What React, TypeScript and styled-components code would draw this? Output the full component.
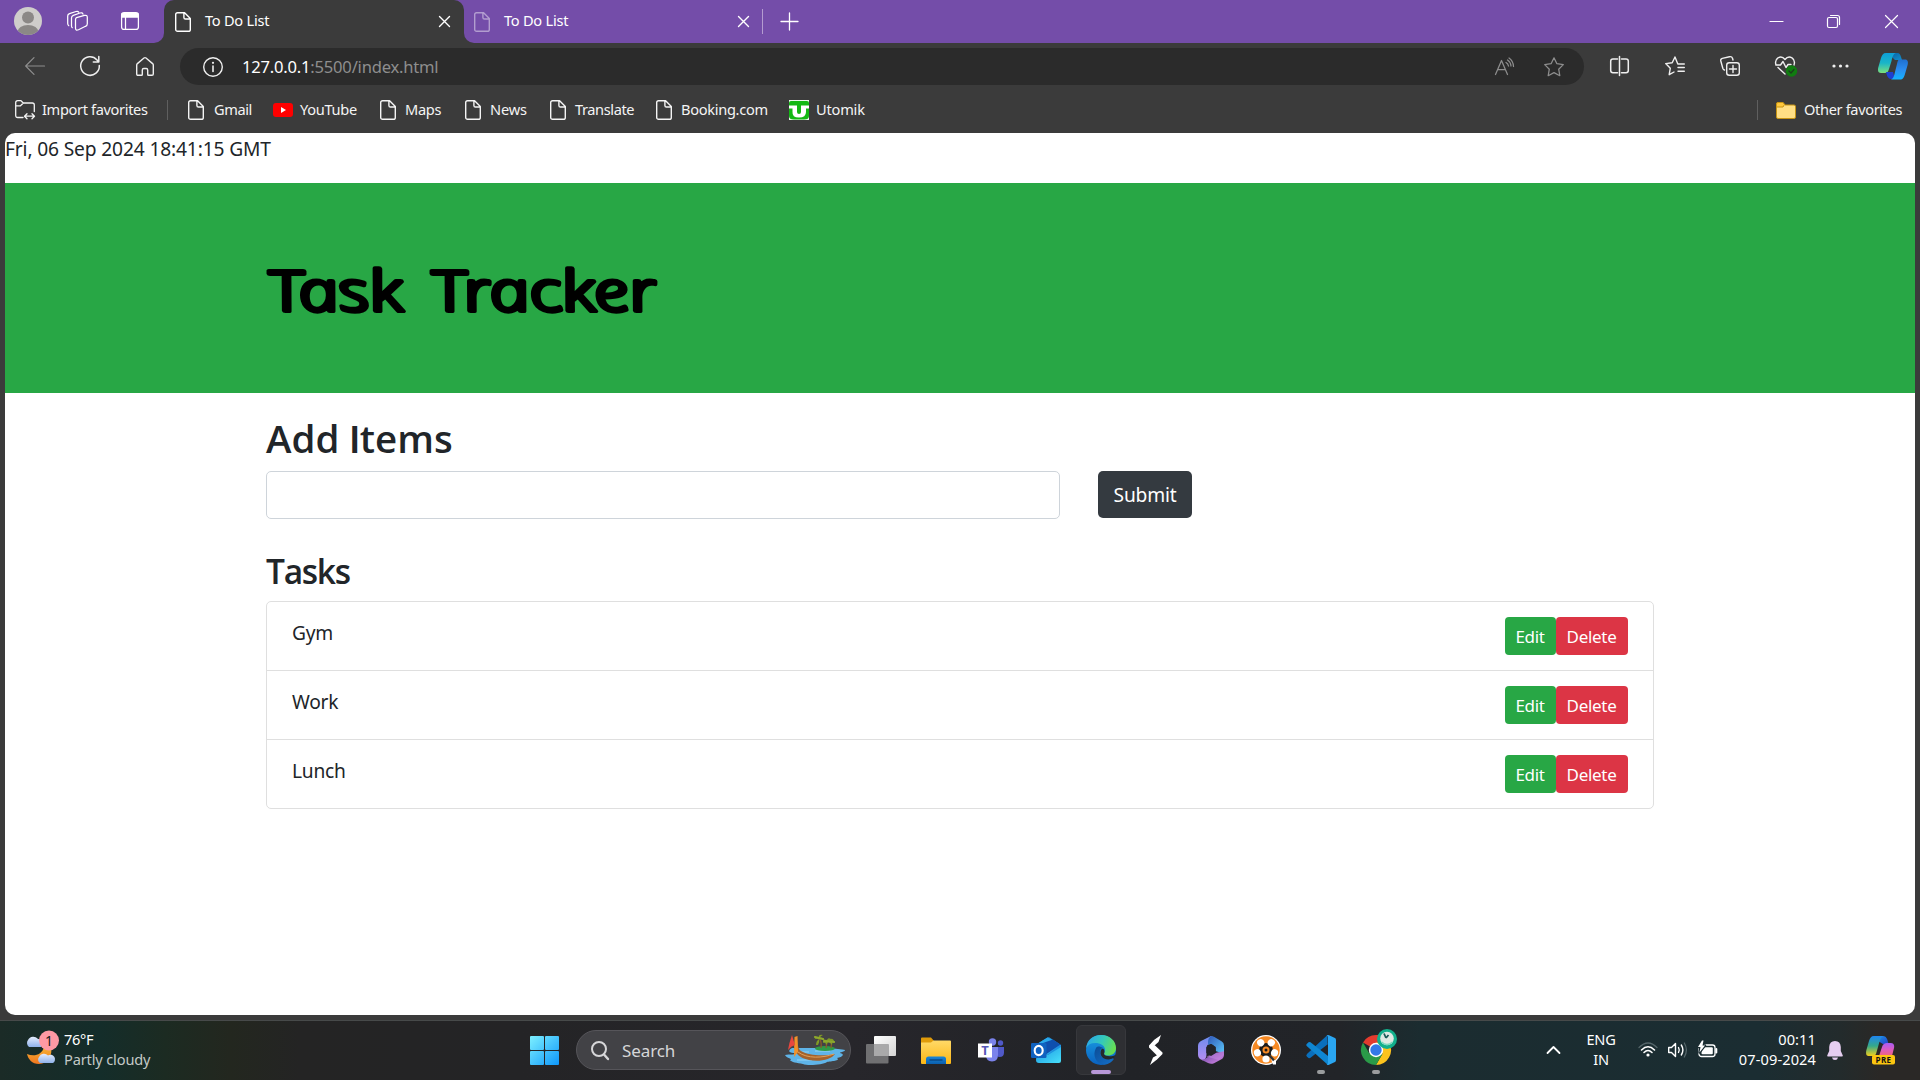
import React from "react";
import styled, { createGlobalStyle } from "styled-components";

const ui = `"Noto Sans", "Open Sans", sans-serif`;

const Global = createGlobalStyle`
  * { box-sizing: border-box; }
  body { margin: 0; background: #3b3b3b; font-family: ${ui}; }
  button { font-family: inherit; cursor: pointer; }
`;

const Desktop = styled.div`
  width: 1920px;
  height: 1080px;
  display: flex;
  flex-direction: column;
  overflow: hidden;
  background: #3b3b3b;
`;

/* ---------- shared ---------- */
const Glyph = styled.svg<{ $ml?: number }>`
  display: block;
  flex: none;
  margin-left: ${(p) => p.$ml ?? 0}px;
  overflow: visible;
  fill: none;
  stroke: currentColor;
  stroke-width: 1.25;
  stroke-linecap: round;
  stroke-linejoin: round;
`;

const Label = styled.span<{ $w: number; $ls?: number }>`
  flex: none;
  width: ${(p) => p.$w}px;
  letter-spacing: ${(p) => p.$ls ?? 0}px;
  white-space: nowrap;
`;

const Rule = styled.span<{ $h: number; $ml: number; $c: string }>`
  flex: none;
  width: 1px;
  height: ${(p) => p.$h}px;
  margin-left: ${(p) => p.$ml}px;
  background: ${(p) => p.$c};
`;

type GP = { w: number; h: number; ml?: number; children: React.ReactNode };
const Icon = ({ w, h, ml, children }: GP) => (
  <Glyph width={w} height={h} viewBox={`0 0 ${w} ${h}`} $ml={ml}>
    {children}
  </Glyph>
);

const PageIcon = ({ ml }: { ml?: number }) => (
  <Icon w={16} h={20} ml={ml}>
    <path d="M2.6.7H9.6L15.3 6.4V17.4A1.9 1.9 0 0 1 13.4 19.3H2.6A1.9 1.9 0 0 1 .7 17.4V2.6A1.9 1.9 0 0 1 2.6.7ZM8.9.9V5.4A1.6 1.6 0 0 0 10.5 7H15" strokeWidth="1.4" />
  </Icon>
);

const Cross = ({ s, ml, sw = 1.4 }: { s: number; ml?: number; sw?: number }) => (
  <Icon w={s} h={s} ml={ml}>
    <path d={`M.5.5L${s - 0.5} ${s - 0.5}M${s - 0.5}.5L.5 ${s - 0.5}`} strokeWidth={sw} />
  </Icon>
);

/* ---------- tab strip ---------- */
const TabStrip = styled.header`
  flex: none;
  height: 43px;
  display: flex;
  align-items: center;
  background: #3b3b3b;
  color: #fff;
  font-size: 14.6px;
`;
const StripStart = styled.div`
  flex: none;
  width: 164px;
  height: 43px;
  display: flex;
  align-items: center;
  padding: 0 0 1px 14px;
  background: #744da9;
  border-bottom-right-radius: 10px;
`;
const ActiveTabBack = styled.div`
  flex: none;
  width: 300px;
  height: 43px;
  background: #744da9;
`;
const ActiveTab = styled.div`
  height: 43px;
  display: flex;
  align-items: center;
  padding-left: 11px;
  background: #3b3b3b;
  border-radius: 10px 10px 0 0;
`;
const StripRest = styled.div`
  flex: 1;
  height: 43px;
  display: flex;
  align-items: center;
  padding-left: 10px;
  background: #744da9;
  border-bottom-left-radius: 10px;
`;
const Faded = styled.span`
  opacity: 0.45;
`;
const TabLabel = styled(Label)`
  margin-left: 14px;
  line-height: 20px;
  padding-bottom: 4px;
`;
const WindowControls = styled.div`
  margin-left: auto;
  display: flex;
  align-items: center;
  padding-right: 22px;
`;

/* ---------- toolbar ---------- */
const Toolbar = styled.div`
  flex: none;
  height: 50px;
  display: flex;
  align-items: center;
  padding: 0 12px 4px 25px;
  color: #efefef;
`;
const AddressBar = styled.div`
  flex: none;
  width: 1404px;
  height: 37px;
  margin: 1px 0 0 26px;
  padding-left: 23px;
  display: flex;
  align-items: center;
  border-radius: 19px;
  background: #2b2b2b;
  font-size: 16.6px;
`;
const Url = styled.span`
  margin-left: 19px;
  width: 1253px;
  letter-spacing: -0.22px;
  color: #8e8e8e;
  white-space: nowrap;
`;
const Host = styled.span`
  color: #fff;
`;
const Dim = styled.span`
  color: #8e8e8e;
`;

/* ---------- favourites ---------- */
const Favorites = styled.nav`
  flex: none;
  height: 40px;
  display: flex;
  align-items: center;
  padding: 0 18px 6px 15px;
  color: #f4f4f4;
  font-size: 14.6px;
`;
const FavLabel = styled(Label)<{ $ml?: number }>`
  margin-left: ${(p) => p.$ml ?? 9}px;
  line-height: 20px;
  padding-bottom: 2px;
`;
const Push = styled.div`
  margin-left: auto;
  display: flex;
  align-items: center;
`;

/* ---------- web page ---------- */
const Page = styled.main`
  flex: none;
  width: 1910px;
  height: 882px;
  margin: 0 5px;
  background: #fff;
  border-radius: 10px;
  overflow: hidden;
  color: #212529;
  font-size: 19.2px;
`;
const Clock = styled.div`
  height: 50px;
  line-height: 31px;
  letter-spacing: -0.15px;
  white-space: nowrap;
`;
const Banner = styled.header`
  height: 210px;
  padding: 64px 0 0 261px;
  background: #28a745;
`;
const BannerTitle = styled.h1`
  margin: 0;
  height: 84px;
`;
/* Slanted letterforms set upright again, with a thick round pen */
const Marker = styled.text`
  font-family: "Comic Sans MS", "Noto Sans", "Open Sans", sans-serif;
  font-style: italic;
  font-weight: 300;
  font-size: 56px;
  fill: #000;
  stroke: #000;
  stroke-width: 4.2px;
  stroke-linejoin: round;
  stroke-linecap: round;
  white-space: pre;
`;
const Container = styled.section`
  width: 1388px;
  margin-left: 261px;
  padding-top: 22px;
`;
const H2 = styled.h2`
  margin: 0;
  height: 56px;
  line-height: 46px;
  font-family: "Open Sans", "Noto Sans", sans-serif;
  font-size: 38.5px;
  font-weight: 600;
  letter-spacing: 0;
`;
const PlainCap = styled.span`
  font-family: Inter, Roboto, sans-serif;
  font-size: 37.5px;
  line-height: 1;
`;
const AddForm = styled.form`
  display: flex;
  align-items: flex-start;
`;
const Input = styled.input`
  width: 794px;
  height: 48px;
  padding: 7px 15px;
  border: 1px solid #ced4da;
  border-radius: 5px;
  outline: none;
  font: inherit;
`;
const Submit = styled.button`
  width: 94px;
  height: 47px;
  margin-left: 38px;
  padding: 0;
  border: 0;
  border-radius: 5px;
  background: #343a40;
  color: #fff;
  font-size: 19.2px;
  letter-spacing: -0.2px;
`;
const H3 = styled.h3`
  margin: 32px 0 0;
  height: 50px;
  line-height: 40px;
  font-family: "Open Sans", "Noto Sans", sans-serif;
  font-size: 33.5px;
  font-weight: 600;
  letter-spacing: -1.3px;
`;
const List = styled.ul`
  margin: 0;
  padding: 0;
  list-style: none;
  border: 1px solid #dfdfdf;
  border-radius: 5px;
`;
const Item = styled.li`
  height: 68px;
  padding: 15px 25px 0;
  display: flex;
  align-items: flex-start;
  line-height: 32px;
  letter-spacing: -0.25px;
  & + & {
    height: 69px;
    border-top: 1px solid #dfdfdf;
  }
`;
const ItemText = styled.span`
  flex: 1;
`;
const SmallButton = styled.button<{ $w: number; $bg: string }>`
  width: ${(p) => p.$w}px;
  height: 38px;
  padding: 0 1px 0 0;
  border: 0;
  border-radius: 4px;
  background: ${(p) => p.$bg};
  color: #fff;
  font-size: 17px;
  letter-spacing: -0.3px;
`;

/* ---------- taskbar ---------- */
const Taskbar = styled.footer`
  flex: none;
  height: 60px;
  margin-top: 5px;
  padding-bottom: 1px;
  display: flex;
  align-items: center;
  border-top: 1px solid #474a4a;
  background: linear-gradient(90deg, #1b2b27 0, #142d2a 100px, #1c2b22 165px, #23271f 230px, #242424 300px, #242426 520px, #27262b 850px, #212327 1120px, #222428 1340px, #1b2c30 1420px, #1b2d32 1760px, #232b2c 1840px, #2a2826 1880px, #2a2826);
  color: #fff;
`;
const Weather = styled.div`
  flex: none;
  width: 519px;
  display: flex;
  align-items: center;
  padding: 0 0 3px 24px;
`;
const WeatherText = styled.div`
  margin-left: 6px;
  padding-top: 1px;
  font-size: 14.6px;
  line-height: 20px;
  color: #c3c9c7;
  letter-spacing: -0.15px;
`;
const Temp = styled.div`
  color: #fff;
  letter-spacing: -0.3px;
`;
const Cell = styled.div<{ $active?: boolean }>`
  position: relative;
  flex: none;
  width: 50px;
  height: 50px;
  margin-left: 5px;
  display: flex;
  align-items: center;
  justify-content: center;
  border-radius: 6px;
  border: 1px solid ${(p) => (p.$active ? "#37383c" : "transparent")};
  background: ${(p) => (p.$active ? "#2e2f33" : "transparent")};
`;
const StartCell = styled(Cell)`
  margin-left: 0;
`;
const RunMark = styled.span<{ $w: number; $c: string }>`
  position: absolute;
  bottom: 0;
  left: ${(p) => (48 - p.$w) / 2}px;
  width: ${(p) => p.$w}px;
  height: 4px;
  border-radius: 2px;
  background: ${(p) => p.$c};
`;
const Search = styled.div`
  flex: none;
  width: 275px;
  height: 40px;
  margin-left: 7px;
  padding: 0 5px 0 14px;
  display: flex;
  align-items: center;
  border: 1px solid #56555a;
  border-radius: 20px;
  background: #424246;
  color: #d6d6d8;
  font-size: 17px;
`;
const SearchLabel = styled(Label)`
  margin-left: 13px;
`;
const Tray = styled.div`
  margin-left: auto;
  padding-right: 25px;
  display: flex;
  align-items: center;
`;
const TrayText = styled.div<{ $w: number; $ml: number; $align: string; $ls: number }>`
  width: ${(p) => p.$w}px;
  margin-left: ${(p) => p.$ml}px;
  padding-bottom: 2px;
  font-size: 14.6px;
  line-height: 20px;
  text-align: ${(p) => p.$align};
  letter-spacing: ${(p) => p.$ls}px;
  white-space: nowrap;
`;

/* Artwork for the coloured icons */
const Art = styled.svg<{ $ml?: number }>`
  display: block;
  flex: none;
  overflow: visible;
  margin-left: ${(p) => p.$ml ?? 0}px;
`;
const SvgLetter = styled.text`
  font-family: "Open Sans", sans-serif;
  font-weight: 700;
`;

const Lin = ({ id, a, b, c, v }: { id: string; a: string; b: string; c?: string; v?: boolean }) => (
  <linearGradient id={id} x1="0" y1="0" x2={v ? "0" : "1"} y2="1">
    <stop offset="0" stopColor={a} />
    {c && <stop offset=".5" stopColor={c} />}
    <stop offset="1" stopColor={b} />
  </linearGradient>
);

const Avatar = () => (
  <Art width="28" height="28" viewBox="0 0 28 28">
    <clipPath id="av"><circle cx="14" cy="14" r="14" /></clipPath>
    <circle cx="14" cy="14" r="14" fill="#cfcdcb" />
    <circle cx="14" cy="10.5" r="6" fill="#8b8886" />
    <ellipse cx="14" cy="25" rx="10.5" ry="7" fill="#8b8886" clipPath="url(#av)" />
  </Art>
);

const Weatherly = () => (
  <Art width="34" height="36" viewBox="0 0 34 36">
    <defs>
      <Lin id="cl" a="#e4edfd" b="#8fb1ea" v />
      <Lin id="mo" a="#f7b733" b="#f0761f" v />
    </defs>
    <path d="M27 15C29 24 24 33 15 33 8 33 4 28 3 23 10 26 18 24 20 16Z" fill="url(#mo)" />
    <path d="M5 16A5 5 0 0 1 4 9 6 6 0 0 1 14 8 4.500 4.500 0 0 1 17 16Z" fill="url(#cl)" />
    <path d="M16 32A4 4 0 0 1 15 26 5.500 5.500 0 0 1 24 24.500 4 4 0 0 1 29 32Z" fill="url(#cl)" />
    <circle cx="25" cy="9.500" r="10" fill="#ff99a4" />
    <text x="25" y="14.500" textAnchor="middle" fontSize="14" fontFamily="Noto Sans, sans-serif" fill="#1a1a1a">1</text>
  </Art>
);

const CopilotArt = ({ w, h, ml }: { w: number; h: number; ml: number }) => (
  <Art width={w} height={h} viewBox="0 0 30 28" $ml={ml}>
    <defs>
      <Lin id="c1" a="#0d9fd8" b="#7be07d" c="#1ab5c8" v />
      <Lin id="c2" a="#1f6fd0" b="#14b4ff" c="#2b8cf0" v />
      <Lin id="c3" a="#0a5fa5" b="#1391c9" />
    </defs>
    <path d="M15 1H19.500C21.500 1 22.500 3 23 5L24 8H17L12 3Z" fill="url(#c3)" />
    <path d="M8 1H18C15 2 14.500 5 13.500 9L11 17C10 20 9 21 7 21H3C0 21-.500 18 .400 15L3 6C4 3 5 1 8 1Z" fill="url(#c1)" />
    <path d="M8 20H15L17 27H13C10 27 9 24 8 20Z" fill="#1d3fd0" />
    <path d="M21 7.500H27C30 7.500 30.300 10 29.600 13L27 22C26 25.500 25 27.500 22 27.500H13C15.500 26.500 16 24 17 20L19 12C19.600 9.500 20 8 21 7.500Z" fill="url(#c2)" />
  </Art>
);

const CopilotPre = () => (
  <Art width="29" height="29" viewBox="0 0 29 29" $ml={23}>
    <defs>
      <Lin id="p1" a="#1e86f0" b="#f2d01b" c="#35a98a" v />
      <Lin id="p2" a="#a85cf5" b="#f0647a" c="#dc5cc0" v />
      <Lin id="p3" a="#1a9be8" b="#2441c8" />
    </defs>
    <path d="M8 0H17C20 0 21.500 3 22 6L22.500 8H17L12 5Z" fill="url(#p3)" />
    <path d="M8 0H17C14 2 13.500 6 12 11L10 18C9 19.500 8 20 6 20H2.500C0 20-.300 17 .400 14L3 5C4 2 5 0 8 0Z" fill="url(#p1)" />
    <path d="M21 7H25C28 7 28.500 10 28 12L26 20H13L16 11C17 8 18.500 7 21 7Z" fill="url(#p2)" />
    <rect x="6" y="19" width="23" height="9.500" rx="2" fill="#fcc510" />
    <SvgLetter x="17.500" y="26.600" textAnchor="middle" fontSize="8" fill="#111" letterSpacing=".400">PRE</SvgLetter>
  </Art>
);

const Boat = () => (
  <Art width="60" height="32" viewBox="0 0 60 32" $ml={87}>
    <path d="M7 14H46C48 15 58 15 60 16 60 18 54 18 55 19 60 20 58 23 52 24 56 27 46 27 42 28 38 31 22 32 18 30 12 29 6 28 5 26 9 25 1 24 0 21 4 20 12 21 11 19 4 19 2 17 7 14Z" fill="#5fb4e8" />
    <path d="M9 18H24M12 26H27M30 17H45" stroke="#94d4f5" strokeWidth="1" />
    <ellipse cx="40" cy="14.500" rx="10" ry="2.500" fill="#2f9a46" />
    <path d="M36 14Q37 8 34 4M41 14Q42 9 42 6M46 14Q47 10 46 7" stroke="#8a5a2a" strokeWidth="1.300" fill="none" />
    <path d="M29 6Q31 2 34 4 33 0 38 1 35 2 35 4 39 3 40 7 37 4 34 5 30 4 29 6ZM38 9Q39 5 42 6 43 3 46 5 48 4 50 9 48 7 46 7 48 9 47 11 45 8 43 8 42 10 41 11 41 8 38 9ZM31 11Q31 7 34 5 35 8 33 11Z" fill="#7f9a25" />
    <path d="M30 3L38 5M39 7L49 8" stroke="#8da82c" strokeWidth="2.200" strokeLinecap="round" />
    <path d="M11 3C13 6 12 15 16 17 24 22 40 22 50 20 46 26 34 28 24 26 14 24 10 19 9 12Z" fill="#a4622c" />
    <path d="M13 18C22 25 38 24 49 20" stroke="#e0a05a" strokeWidth="1" fill="none" />
    <path d="M9.500 3L12.500 2 13 18 9 23Z" fill="#f2922a" />
    <path d="M7 1Q9 8 10 11 6 12 3 16 4 9 7 1Z" fill="#e8473f" />
  </Art>
);

const StartArt = () => (
  <Art width="29" height="29" viewBox="0 0 29 29">
    <defs>
      <linearGradient id="st" x1="0" y1="0" x2="29" y2="29" gradientUnits="userSpaceOnUse">
        <stop offset="0" stopColor="#7df0ff" /><stop offset="1" stopColor="#0e97fb" />
      </linearGradient>
    </defs>
    <g fill="url(#st)">
      <rect width="14" height="14" rx="1" /><rect x="15" width="14" height="14" rx="1" />
      <rect y="15" width="14" height="14" rx="1" /><rect x="15" y="15" width="14" height="14" rx="1" />
    </g>
  </Art>
);

const TaskView = () => (
  <Art width="30" height="28" viewBox="0 0 30 28">
    <defs><Lin id="tv" a="#ffffff" b="#d4d4d4" /></defs>
    <rect x="8" y="0" width="22" height="20" rx="1" fill="url(#tv)" />
    <rect x="0" y="8" width="22.500" height="19.500" rx="1" fill="#707072" />
    <path d="M8 8H22.500V20H8Z" fill="#a9a9aa" />
  </Art>
);

const Explorer = () => (
  <Art width="30" height="27" viewBox="0 0 30 27">
    <defs><Lin id="ex" a="#ffd968" b="#fcb714" v /><Lin id="ex2" a="#1a86d8" b="#0a5fae" v /></defs>
    <path d="M0 1.500Q0 .500 1 .500H10L13 4H20V10H0Z" fill="#e09b0a" />
    <path d="M0 5.500H10L12.500 3.500H29Q30 3.500 30 4.500V26Q30 27 29 27H1Q0 27 0 26Z" fill="url(#ex)" />
    <path d="M5 27V22Q5 19.500 7.500 19.500H22.500Q25 19.500 25 22V27Z" fill="url(#ex2)" />
    <path d="M8.500 23H21.500" stroke="#073f78" strokeWidth="1.200" />
  </Art>
);

const Teams = () => (
  <Art width="26" height="24" viewBox="0 0 26 24">
    <circle cx="14.500" cy="4" r="3.700" fill="#7b83eb" />
    <circle cx="22.500" cy="5" r="2.700" fill="#5059c9" />
    <path d="M17 9H26V14.500Q26 19 21.500 19 18 19 17 15Z" fill="#5059c9" />
    <path d="M8 9H20V16.500Q20 23.500 14 23.500 8 23.500 8 16.500Z" fill="#7b83eb" />
    <rect x="0" y="5.500" width="14" height="14" fill="#fff" />
    <SvgLetter x="7" y="17" textAnchor="middle" fontSize="13" fill="#5558b8">T</SvgLetter>
  </Art>
);

const Outlook = () => (
  <Art width="30" height="27" viewBox="0 0 30 27">
    <defs><Lin id="ol" a="#1b95e0" b="#48e0fb" /></defs>
    <path d="M6 7L16.500.400Q17.500 0 18.500.400L30 8V20L6 16Z" fill="#1e90e0" />
    <path d="M6 7L16.500.400 29 7.500 16 18Z" fill="#28a8ea" />
    <path d="M12 6L22 2.500 29.500 7.500 14 18 10 15Z" fill="#0f4fae" />
    <path d="M6 14L17 18 30 10V24Q30 26 28 26H8Q5 26 5 23Z" fill="url(#ol)" />
    <rect x="0" y="6" width="15.500" height="15" rx="1.200" fill="#0f62c0" />
    <ellipse cx="7.700" cy="13.500" rx="4" ry="4.600" fill="none" stroke="#fff" strokeWidth="2.100" />
  </Art>
);

const EdgeArt = () => (
  <Art width="30" height="30" viewBox="0 0 30 30">
    <defs>
      <linearGradient id="e1" x1="0" y1=".3" x2="1" y2=".6">
        <stop offset="0" stopColor="#2aa7ea" /><stop offset=".5" stopColor="#35c9b8" /><stop offset="1" stopColor="#6be04c" />
      </linearGradient>
      <Lin id="e2" a="#1a9de4" b="#0a61bf" v />
      <Lin id="e3" a="#0c4c96" b="#1470c8" />
    </defs>
    <circle cx="15" cy="15" r="15" fill="url(#e2)" />
    <path d="M.100 13C1 5 7 0 15 0 24 0 30 6 30 13 30 18 26 20.500 22 20.500 18 20.500 17.500 19 18.500 17.500 20 15 19 10 13 8.500 7 7 2 9 .100 13Z" fill="url(#e1)" />
    <path d="M10 13C6 20 10 29 18 29.700 23 29.500 27 26 28 23.500 24 25.500 14 25 14 17 14 14 16 13 17 13 14 11 11 11 10 13Z" fill="url(#e3)" />
    <path d="M14.500 17.500C14 20 17 25 23 24.500 26 24 27.500 23 28 23.500L29.500 20C26 22 18.500 21.500 18 19 18.500 17.500 19 15 17 13.500 15 14 14.500 15.500 14.500 17.500Z" fill="#25282c" />
  </Art>
);

const SArt = () => (
  <Art width="14" height="30" viewBox="0 0 14 30">
    <path d="M12 0L5 5 5.500 10.500 9.500 7ZM5.500 4.500L0 10.500V12.500L8 20.500 7.500 25 13.500 19V17.500L5.500 10ZM1 30L8 24.500 8.500 20 4 22.500Z" fill="#fff" />
  </Art>
);

const M365 = () => (
  <Art width="26" height="28" viewBox="0 0 26 28">
    <defs>
      <Lin id="m1" a="#6c8df0" b="#b58cf0" v />
      <Lin id="m2" a="#2f57b8" b="#5cc8fa" />
      <Lin id="m3" a="#5b3d9c" b="#d98ae8" />
    </defs>
    <path d="M13 0L3 5Q0 6.500 0 10V18.500Q0 22 3 23.500L5 24.500Q8.500 23 8.500 18V12Q8.500 9 11 7.500L17 2Z" fill="url(#m1)" />
    <path d="M13 0Q10 2 10 6V9L13 8Q17.500 10 17.500 13V15L26 18V9.500Q26 6.500 23.500 5.200L16 .800Q14.500 0 13 0Z" fill="url(#m2)" />
    <path d="M26 15.500V18.500Q26 22 23 23.500L16 27.200Q13 28.500 10 27L2 23Q6 24.500 9 21.500L17 17Z" fill="url(#m3)" />
    <path d="M26 15V19L21 24 8 20.500 17.500 17Z" fill="#c88ae6" opacity=".5" />
    <path d="M13 8L17.800 11V17L13 20 8.300 17V11Z" fill="#22242a" />
  </Art>
);

const Reel = () => (
  <Art width="30" height="30" viewBox="0 0 30 30">
    <circle cx="15" cy="15" r="15" fill="#fff" />
    <circle cx="15" cy="15" r="13.700" fill="#f78a24" />
    <circle cx="15" cy="15" r="7" fill="#1c1c1c" />
    {[0, 72, 144, 216, 288].map((a) => (
      <circle key={a} cx="15" cy="6" r="3.600" fill="#fff" transform={`rotate(${a + 36} 15 15)`} />
    ))}
    <circle cx="15" cy="15" r="3.500" fill="#f78a24" />
    <circle cx="15" cy="15" r="1.500" fill="#1c1c1c" />
    <path d="M19 21L25 26 25 29.500H22Z" fill="#fff" />
    <path d="M18.500 20.500L23 25.500" stroke="#333" strokeWidth="2.400" />
  </Art>
);

const VSCode = () => (
  <Art width="30" height="30" viewBox="0 0 30 30">
    <path d="M21.500 8.500V0L2.500 17.500 1 19Q-.500 20.500 1 21.700L2.500 23Q3.500 23.500 4.500 22.700L22 9Z" fill="#0a6fbc" />
    <path d="M22 21.500V30L.700 11Q-.300 10 .700 9L2.500 7.300Q3.500 6.700 4.500 7.300L22 21Z" fill="#0f86d2" />
    <path d="M20.500.800Q21.500-.400 23 .200L29 3Q30 3.500 30 5V25Q30 26.500 29 27L23 29.800Q21.500 30.400 20.500 29.200 22 29.500 22 27.500V2.500Q22 .500 20.500.800Z" fill="#2aa6f2" />
  </Art>
);

const Chrome = () => (
  <Art width="30" height="30" viewBox="0 0 30 30">
    <path d="M15 15L2 7.500A15 15 0 0 1 28 7.500Z" fill="#e33b2e" />
    <path d="M15 0A15 15 0 0 1 28 7.500H15Z" fill="#e33b2e" />
    <path d="M28 7.500A15 15 0 0 1 15 30L21.500 18.700 15 7.500Z" fill="#fcc31e" />
    <path d="M2 7.500A15 15 0 0 0 15 30L21.500 18.700H8.500Z" fill="#2a9a48" />
    <circle cx="15" cy="15" r="7.200" fill="#fff" />
    <circle cx="15" cy="15" r="5.700" fill="#3279e8" />
    <circle cx="26" cy="4" r="10" fill="#12b08c" />
    <circle cx="26" cy="3.500" r="6.800" fill="#dfe9e4" />
    <path d="M23-1.500L25 3M25 3L27.500 0" stroke="#1a5a58" strokeWidth="1.800" fill="none" />
    <path d="M20.500 7Q26 12 31.500 7" stroke="#7ad8bd" strokeWidth="1.500" fill="none" />
  </Art>
);

const tasks = ["Gym", "Work", "Lunch"];

export default function App() {
  return (
    <Desktop>
      <Global />
      <TabStrip>
        <StripStart>
          <Avatar />
          <Icon w={21} h={20} ml={25}>
            <path d="M9.500 6.600L17.500 4.400Q20.300 3.800 20.300 6.400V12.700Q20.300 14.700 18.500 15.300L11.500 18.700Q8.500 20 8.500 17V8.800Q8.500 7 9.500 6.600Z" />
            <path d="M5.300 16.700Q4.500 16.300 4.500 14.800V7Q4.500 5 6.300 4.300L13 2Q15.500 1.300 16 3.200M1.800 14.700Q.700 14 .700 12.500V5Q.700 3.200 2.500 2.600L9 .500Q11-.100 11.700 1.200" />
          </Icon>
          <Icon w={18} h={18} ml={33}>
            <rect x=".6" y=".6" width="16.800" height="16.800" rx="2.500" />
            <path d="M1 1.500H17V5H1Z" fill="#fff" />
            <path d="M4.500 5V17" />
          </Icon>
        </StripStart>
        <ActiveTabBack>
          <ActiveTab>
            <PageIcon />
            <TabLabel $w={234} $ls={-0.25}>To Do List</TabLabel>
            <Cross s={11} />
          </ActiveTab>
        </ActiveTabBack>
        <StripRest>
          <Faded><PageIcon /></Faded>
          <TabLabel $w={234} $ls={-0.25}>To Do List</TabLabel>
          <Cross s={11} />
          <Rule $h={25} $ml={13} $c="#b49bd0" />
          <Icon w={17} h={17} ml={18}><path d="M8.500 0V17M0 8.500H17" strokeWidth="1.300" /></Icon>
          <WindowControls>
            <Icon w={13} h={13}><path d="M0 6.500H13" strokeWidth="1.200" /></Icon>
            <Icon w={13} h={13} ml={44}>
              <rect x=".5" y="2.500" width="10" height="10" rx="1.500" strokeWidth="1.200" />
              <path d="M3.500.500H10.500Q12.500.500 12.500 2.500V9.500" strokeWidth="1.200" />
            </Icon>
            <Cross s={13} ml={45} sw={1.2} />
          </WindowControls>
        </StripRest>
      </TabStrip>

      <Toolbar>
        <Dim><Icon w={20} h={18}><path d="M19.500 9H.700M9 .700L.700 9 9 17.300" strokeWidth="1.200" /></Icon></Dim>
        <Icon w={20} h={20} ml={35}><path d="M19.300 9.500A9.300 9.300 0 1 1 17 3.900L18.700 5.800M18.800 .500V5.900H13.300" strokeWidth="1.500" /></Icon>
        <Icon w={18} h={19} ml={36}><path d="M.700 8Q.700 7.300 1.400 6.600L8 1Q9 .200 10 1L16.600 6.600Q17.300 7.300 17.300 8V17Q17.300 18.300 16 18.300H12.500Q11.700 18.300 11.700 17.500V13Q11.700 11.500 10.200 11.500H7.800Q6.300 11.500 6.300 13V17.500Q6.300 18.300 5.500 18.300H2Q.700 18.300.700 17Z" strokeWidth="1.400" /></Icon>
        <AddressBar>
          <Icon w={20} h={20}><circle cx="10" cy="10" r="9.300" strokeWidth="1.400" /><path d="M10 9V14.500" strokeWidth="1.600" /><circle cx="10" cy="5.800" r=".5" /></Icon>
          <Url><Host>127.0.0.1</Host>:5500/index.html</Url>
          <Dim><Icon w={19} h={18}><path d="M.500 16.500L6.500 2.500 12.500 16.500M2.600 11.500H10.400M11 4.500Q13 5.500 13.500 8M12.500 2Q15.700 4 16 8M14 0Q18.300 3 18.500 8.500" /></Icon></Dim>
          <Dim><Icon w={20} h={20} ml={30}><path d="M10 .800L12.900 6.700 19.300 7.600 14.700 12.200 15.800 18.700 10 15.600 4.200 18.700 5.300 12.200.700 7.600 7.100 6.700Z" /></Icon></Dim>
        </AddressBar>
        <Icon w={19} h={20} ml={26}><path d="M7.500 3H3Q.700 3 .700 5.200V14.500Q.700 16.700 3 16.700H7.500M11.500 3H16Q18.300 3 18.300 5.200V14.500Q18.300 16.700 16 16.700H11.500M9.500 .500V19.500" strokeWidth="1.500" /></Icon>
        <Icon w={20} h={20} ml={36}><path d="M19.300 8H12.800L10 1 7.200 6.700.700 7.600 5.300 12.200 4.200 18.700 9 16M13 11.500H19.300M13 15.300H19.300" strokeWidth="1.400" /></Icon>
        <Icon w={20} h={20} ml={35}><rect x="6.700" y="6.700" width="12.600" height="12.600" rx="2.500" strokeWidth="1.400" /><path d="M13 9.500V16.500M9.500 13H16.500M4.500 14Q3.300 13.700 2.800 12.200L.800 5Q.300 3 2.300 2.400L9.500.700Q11.800.200 12.500 2.200L13 4" strokeWidth="1.400" /></Icon>
        <Icon w={22} h={21} ml={35}>
          <path d="M1 9Q-.500 4 3 1.800 7-.300 10 3.500 13-.300 17 1.800 20.500 4 19 9M3 11.500L10 18M.800 9H5.500L8 5.500 11 11.500 13 8.500H16" strokeWidth="1.400" />
          <circle cx="16.500" cy="15" r="5.700" fill="#107c10" stroke="none" />
          <path d="M14 15L16 17 19 13.500" stroke="#1d3a1d" strokeWidth="1.200" />
        </Icon>
        <Icon w={17} h={4} ml={35}><g fill="#efefef" stroke="none"><circle cx="2" cy="2" r="1.600" /><circle cx="8.500" cy="2" r="1.600" /><circle cx="15" cy="2" r="1.600" /></g></Icon>
        <CopilotArt w={30} h={28} ml={29} />
      </Toolbar>

      <Favorites>
        <Icon w={20} h={20}>
          <path d="M8 17.500H2.700Q.700 17.500.700 15.500V2.800Q.700.700 2.700.700H6L8.300 3H17.300Q19.300 3 19.300 5V11.500M.700 5.800H5.500L8.300 3M10 16.200H19M12 13.700L9.500 16.200 12 18.700M17 13.700L19.500 16.200 17 18.700" strokeWidth="1.300" />
        </Icon>
        <FavLabel $w={125} $ml={7} $ls={-0.35}>Import favorites</FavLabel>
        <Rule $h={20} $ml={0} $c="#5f5f5f" />
        <PageIcon ml={20} />
        <FavLabel $w={59} $ml={10} $ls={-0.4}>Gmail</FavLabel>
        <Art width="20" height="14" viewBox="0 0 20 14"><rect width="20" height="14" rx="3" fill="#f00" /><path d="M8 4L13 7 8 10Z" fill="#fff" /></Art>
        <FavLabel $w={80} $ml={7} $ls={-0.3}>YouTube</FavLabel>
        <PageIcon />
        <FavLabel $w={60} $ls={-0.3}>Maps</FavLabel>
        <PageIcon />
        <FavLabel $w={60} $ls={-0.2}>News</FavLabel>
        <PageIcon />
        <FavLabel $w={81} $ls={-0.4}>Translate</FavLabel>
        <PageIcon />
        <FavLabel $w={108} $ls={-0.3}>Booking.com</FavLabel>
        <Art width="20" height="20" viewBox="0 0 20 20">
          <rect width="20" height="20" fill="#eaf6ea" />
          <path d="M0 3Q0 1 2 1H18Q20 1 20 3V16Q20 19.500 15 19.500H5Q0 19.500 0 16Z" fill="#12b812" />
          <path d="M0 5.500H8V12Q8 14 10 14T12 12V5.500H20V8.500H17V12Q17 17.500 10 17.500T3.500 12V8.500H0Z" fill="#fff" />
        </Art>
        <FavLabel $w={60} $ml={7} $ls={-0.2}>Utomik</FavLabel>
        <Push>
          <Rule $h={20} $ml={0} $c="#5f5f5f" />
          <Art width="20" height="17" viewBox="0 0 20 17" $ml={18}>
            <path d="M.500 2Q.500.500 2 .500H7L9 3H18Q19.500 3 19.500 4.500V15Q19.500 16.500 18 16.500H2Q.500 16.500.500 15Z" fill="#ffdf85" stroke="#c79413" />
            <path d="M.500 2Q.500.500 2 .500H7L8.500 2.500 7 5H.500Z" fill="#ffc83d" stroke="#c79413" />
          </Art>
          <FavLabel $w={98} $ml={8} $ls={-0.35}>Other favorites</FavLabel>
        </Push>
      </Favorites>

      <Page>
        <Clock>Fri, 06 Sep 2024 18:41:15 GMT</Clock>
        <Banner>
          <BannerTitle>
            <Art width="400" height="84" viewBox="0 0 400 84">
              <g transform="translate(9 64) skewX(15.5)">
                <Marker x="0" y="0">
                  <tspan x="-2" textLength="134" lengthAdjust="spacingAndGlyphs">Task</tspan>
                  {" "}
                  <tspan x="161" textLength="225" lengthAdjust="spacingAndGlyphs">Tracker</tspan>
                </Marker>
              </g>
            </Art>
          </BannerTitle>
        </Banner>
        <Container>
          <H2>Add <PlainCap>I</PlainCap>tems</H2>
          <AddForm onSubmit={(e) => e.preventDefault()}>
            <Input />
            <Submit>Submit</Submit>
          </AddForm>
          <H3>Tasks</H3>
          <List>
            {tasks.map((t) => (
              <Item key={t}>
                <ItemText>{t}</ItemText>
                <SmallButton $w={51} $bg="#28a745">Edit</SmallButton>
                <SmallButton $w={72} $bg="#dc3545">Delete</SmallButton>
              </Item>
            ))}
          </List>
        </Container>
      </Page>

      <Taskbar>
        <Weather>
          <Weatherly />
          <WeatherText><Temp>76°F</Temp>Partly cloudy</WeatherText>
        </Weather>
        <StartCell><StartArt /></StartCell>
        <Search>
          <Icon w={18} h={19}><circle cx="8" cy="8" r="7" strokeWidth="2" /><path d="M13 13.500L17 18" strokeWidth="2.400" /></Icon>
          <SearchLabel $w={76} $ls={-0.1}>Search</SearchLabel>
          <Boat />
        </Search>
        <Cell><TaskView /></Cell>
        <Cell><Explorer /></Cell>
        <Cell><Teams /></Cell>
        <Cell><Outlook /></Cell>
        <Cell $active><EdgeArt /><RunMark $w={20} $c="#b898d8" /></Cell>
        <Cell><SArt /></Cell>
        <Cell><M365 /></Cell>
        <Cell><Reel /></Cell>
        <Cell><VSCode /><RunMark $w={8} $c="#9a9c9e" /></Cell>
        <Cell><Chrome /><RunMark $w={8} $c="#9a9c9e" /></Cell>
        <Tray>
          <Icon w={13} h={8}><path d="M.500 7L6.500 1 12.500 7" strokeWidth="1.800" /></Icon>
          <TrayText $w={40} $ml={21} $align="center" $ls={-0.3}>ENG<br />IN</TrayText>
          <Icon w={18} h={16} ml={18}>
            <path d="M0 5.500Q9-3.500 18 5.500" stroke="#55666a" />
            <path d="M2.500 8Q9 1.500 15.500 8M5 10.500Q9 6.500 13 10.500" strokeWidth="1.600" />
            <circle cx="9" cy="13" r="1.600" fill="#fff" stroke="none" />
          </Icon>
          <Icon w={20} h={16} ml={11}>
            <path d="M.700 5.500H3.500L7.500 1.500V14.500L3.500 10.500H.700Z" strokeWidth="1.400" />
            <path d="M10.500 5.500Q12 8 10.500 10.500M13.300 3Q16.500 8 13.300 13" strokeWidth="1.400" />
            <path d="M16.300 1Q20.500 8 16.300 15" stroke="#55666a" />
          </Icon>
          <Icon w={20} h={17} ml={10}>
            <rect x="1" y="3" width="16" height="11.500" rx="2.500" strokeWidth="1.300" />
            <rect x="3.500" y="5.300" width="11.300" height="7" rx="1" fill="#fff" stroke="none" />
            <path d="M18.300 7V10.500" strokeWidth="2" />
            <path d="M4-1.500L0 5H2.500L1.500 10.500 7 3.500H4.500L5.500-1.500Z" fill="#fff" stroke="#1b2d32" strokeWidth="2.400" paintOrder="stroke" />
          </Icon>
          <TrayText $w={84} $ml={14} $align="right" $ls={0.1}>00:11<br />07-09-2024</TrayText>
          <Art width="16" height="19" viewBox="0 0 16 19" $ml={11}>
            <path d="M8 0Q13.500 0 13.800 6V10L15.800 14.500Q16 15.500 15 15.500H1Q0 15.500.200 14.500L2.200 10V6Q2.500 0 8 0ZM5 16.500H11Q10.500 19 8 19T5 16.500Z" fill="#e6cdf0" />
          </Art>
          <CopilotPre />
        </Tray>
      </Taskbar>
    </Desktop>
  );
}
